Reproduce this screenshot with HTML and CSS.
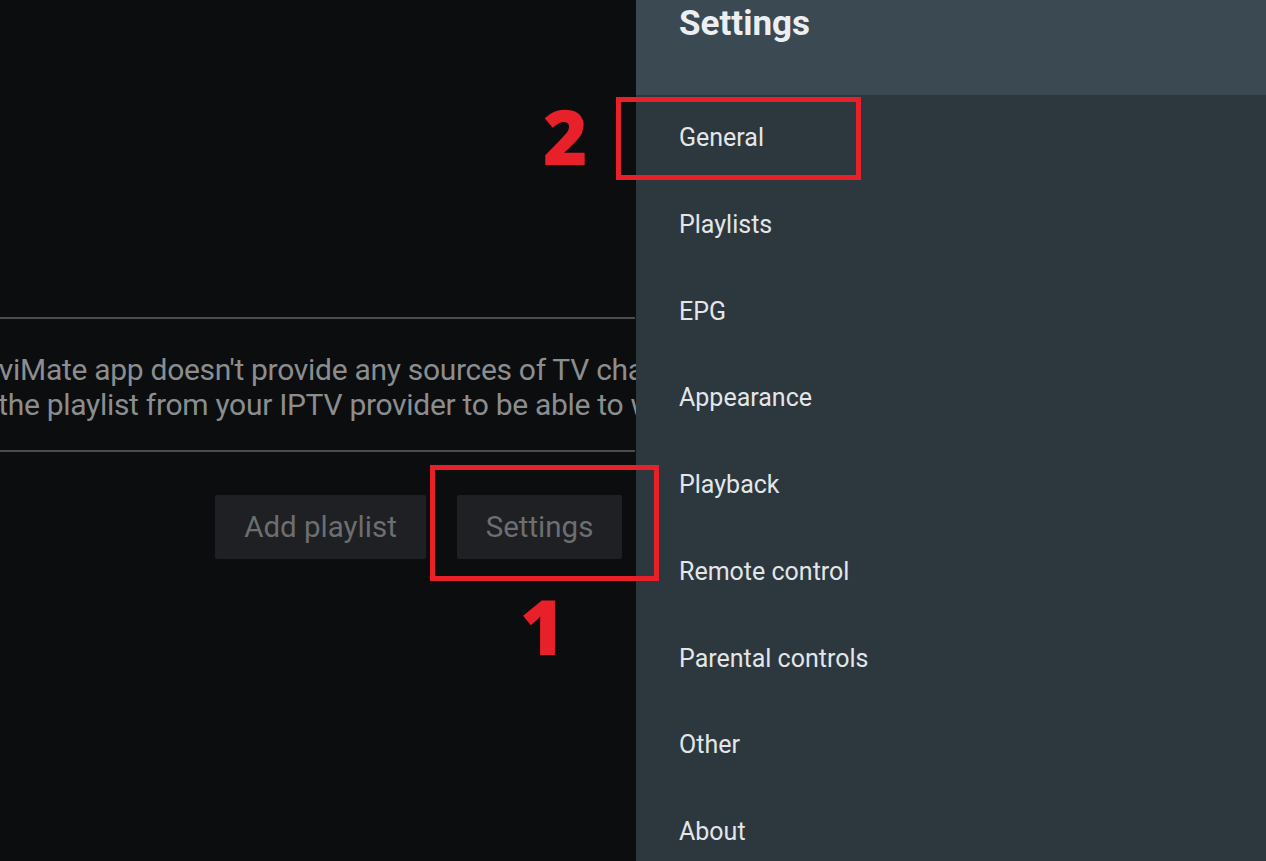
FILE: index.html
```html
<!DOCTYPE html>
<html lang="en">
<head>
<meta charset="utf-8">
<title>TiviMate Settings</title>
<link rel="stylesheet" href="styles.css">
</head>
<body>
<div class="screen">
  <section class="left">
    <div class="divider"></div>
    <div class="message">
      <p>TiviMate app doesn't provide any sources of TV channels.</p>
      <p>Add the playlist from your IPTV provider to be able to watch TV.</p>
    </div>
    <div class="divider"></div>
    <div class="actions">
      <button class="btn btn-add">Add playlist</button>
      <button class="btn btn-settings">Settings</button>
    </div>
  </section>
  <aside class="panel">
    <header class="panel-head">Settings</header>
    <ul class="menu">
      <li>General</li>
      <li>Playlists</li>
      <li>EPG</li>
      <li>Appearance</li>
      <li>Playback</li>
      <li>Remote control</li>
      <li>Parental controls</li>
      <li>Other</li>
      <li>About</li>
    </ul>
  </aside>
  <div class="mark mark-box mark-box-1"></div>
  <div class="mark mark-num mark-num-1">1</div>
  <div class="mark mark-box mark-box-2"></div>
  <div class="mark mark-num mark-num-2">2</div>
</div>
</body>
</html>
```
FILE: styles.css
```css
* { box-sizing: border-box; }
html, body { margin: 0; padding: 0; }
body {
  width: 1266px;
  height: 861px;
  overflow: hidden;
  background: #0b0d0f;
  font-family: Roboto, "Liberation Sans", Arial, sans-serif;
}
.screen {
  position: relative;
  display: flex;
  width: 1266px;
  height: 861px;
}
.left {
  width: 636px;
  flex: none;
  background: #0b0d0f;
  padding-top: 317px;
  overflow: hidden;
}
.divider {
  height: 2px;
  background: #4a4d50;
  width: 635px;
}
.message {
  width: 1000px;
  margin-left: -152px;
  padding: 33px 0 28px;
  text-align: center;
  color: #8b8d8f;
  font-size: 30px;
  line-height: 35px;
  letter-spacing: -0.3px;
}
.message p { margin: 0; white-space: nowrap; }
.actions {
  display: flex;
  justify-content: flex-end;
  gap: 31px;
  padding: 43px 14px 0 0;
}
.btn {
  height: 64px;
  border: none;
  border-radius: 2px;
  background: #1e2023;
  color: #6c6e70;
  font-family: inherit;
  font-size: 29.5px;
  padding: 0;
}
.btn-add { width: 211px; }
.btn-settings { width: 165px; }
.panel {
  flex: 1;
  background: #2c373e;
  display: flex;
  flex-direction: column;
  overflow: hidden;
}
.panel-head {
  flex: none;
  height: 95px;
  background: #3a4952;
  color: #eceff1;
  font-size: 35px;
  font-weight: 700;
  line-height: 48px;
  padding-left: 43px;
}
.menu {
  flex: none;
  list-style: none;
  margin: 0;
  padding: 0;
}
.menu li {
  height: 86.75px;
  line-height: 86.75px;
  padding-left: 43px;
  color: #e3e6e8;
  font-size: 25px;
}
.mark { position: absolute; }
.mark-box {
  border: 5px solid #e8202a;
}
.mark-box-1 { left: 430px; top: 465px; width: 229px; height: 116px; }
.mark-box-2 { left: 616px; top: 97px; width: 245px; height: 83px; }
.mark-num {
  color: #e8202a;
  font-family: "Open Sans", "Liberation Sans", sans-serif;
  font-weight: 800;
  font-size: 76px;
  line-height: 1;
}
.mark-num-1 { left: 520px; top: 588px; }
.mark-num-2 { left: 543px; top: 98px; }
```
